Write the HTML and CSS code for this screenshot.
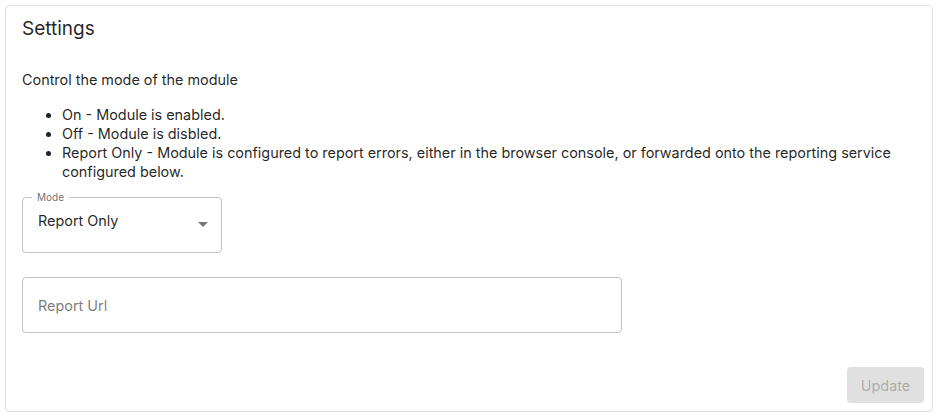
FILE: index.html
```html
<!DOCTYPE html>
<html>
<head>
<meta charset="utf-8">
<link rel="stylesheet" href="styles.css">
</head>
<body>
<div class="card">
  <div class="card-content">
    <h2 class="title">Settings</h2>
    <p class="desc">Control the mode of the module</p>
    <ul class="list">
      <li>On - Module is enabled.</li>
      <li>Off - Module is disbled.</li>
      <li>Report Only - Module is configured to report errors, either in the browser console, or forwarded onto the reporting service configured below.</li>
    </ul>
    <div class="field select">
      <fieldset class="outline"><legend>Mode</legend></fieldset>
      <span class="value">Report Only</span>
      <svg class="arrow" width="24" height="24" viewBox="0 0 24 24"><path d="M7 10l5 5 5-5z" fill="rgba(0,0,0,0.54)"/></svg>
    </div>
    <div class="field text">
      <fieldset class="outline"></fieldset>
      <span class="placeholder">Report Url</span>
    </div>
  </div>
  <div class="card-actions">
    <button class="btn" disabled>Update</button>
  </div>
</div>
</body>
</html>
```

FILE: styles.css
```css
html, body {
  margin: 0;
  padding: 0;
  background: #fff;
}
body {
  padding: 5px;
  font-family: Inter, Roboto, "Liberation Sans", sans-serif;
  color: rgba(0,0,0,0.87);
}
.card {
  width: 928px;
  height: 407px;
  box-sizing: border-box;
  border: 1px solid #e0e0e0;
  border-radius: 4px;
  display: flex;
  flex-direction: column;
  justify-content: space-between;
}
.card-content {
  padding: 11px 16px 0 16px;
}
.title {
  margin: 0;
  font-size: 19px;
  font-weight: 400;
  line-height: 24px;
}
.desc {
  margin: 29px 0 0 0;
  font-size: 14.4px;
  line-height: 20px;
}
.list {
  margin: 15px 0 0 0;
  padding-left: 40px;
  font-size: 14.4px;
  line-height: 19px;
}
.field {
  position: relative;
  height: 56px;
  box-sizing: border-box;
}
.outline {
  position: absolute;
  inset: -5px 0 0 0;
  margin: 0;
  padding: 0 9px;
  border: 1px solid rgba(0,0,0,0.23);
  border-radius: 4px;
  pointer-events: none;
}
.outline legend {
  padding: 0 5px;
  font-size: 10px;
  line-height: 11px;
  color: rgba(0,0,0,0.6);
}
.select {
  width: 200px;
  margin-top: 16px;
}
.value {
  position: absolute;
  left: 16px;
  top: 14px;
  font-size: 14.4px;
  line-height: 20px;
}
.arrow {
  position: absolute;
  right: 7px;
  top: 15px;
}
.text {
  width: 600px;
  margin-top: 24px;
}
.text .outline {
  inset: 0;
}
.placeholder {
  position: absolute;
  left: 16px;
  top: 19px;
  font-size: 14.4px;
  line-height: 20px;
  color: rgba(0,0,0,0.54);
}
.card-actions {
  display: flex;
  justify-content: flex-end;
  padding: 8px;
}
.btn {
  width: 77px;
  height: 36px;
  border: none;
  border-radius: 4px;
  background: rgba(0,0,0,0.12);
  color: rgba(0,0,0,0.26);
  font-family: Inter, Roboto, "Liberation Sans", sans-serif;
  font-size: 14.4px;
}
```
